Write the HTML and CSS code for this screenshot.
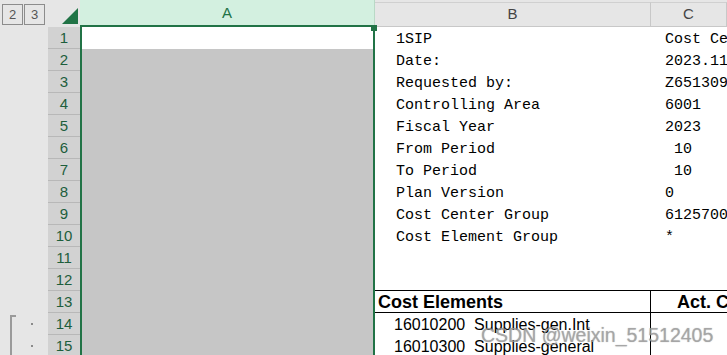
FILE: index.html
```html
<!DOCTYPE html>
<html lang="en">
<head>
    <meta charset="UTF-8">
    <meta name="viewport" content="width=device-width, initial-scale=1.0">
    <title>Cost Center Report</title>
    <link rel="stylesheet" href="styles.css">
</head>
<body>
    <div class="sheet">
        <div class="row head">
            <div class="outline">
                <span class="level">2</span>
                <span class="level">3</span>
            </div>
            <div class="corner"><span class="select-all"></span></div>
            <div class="col-head active">A</div>
            <div class="col-head">B</div>
            <div class="col-head">C</div>
        </div>

        <div class="row"><div class="outline"></div><div class="num">1</div><div class="a current"></div><div class="b">1SIP</div><div class="c">Cost Center</div></div>
        <div class="row"><div class="outline"></div><div class="num">2</div><div class="a"></div><div class="b">Date:</div><div class="c">2023.11</div></div>
        <div class="row"><div class="outline"></div><div class="num">3</div><div class="a"></div><div class="b">Requested by:</div><div class="c">Z651309</div></div>
        <div class="row"><div class="outline"></div><div class="num">4</div><div class="a"></div><div class="b">Controlling Area</div><div class="c">6001</div></div>
        <div class="row"><div class="outline"></div><div class="num">5</div><div class="a"></div><div class="b">Fiscal Year</div><div class="c">2023</div></div>
        <div class="row"><div class="outline"></div><div class="num">6</div><div class="a"></div><div class="b">From Period</div><div class="c"> 10</div></div>
        <div class="row"><div class="outline"></div><div class="num">7</div><div class="a"></div><div class="b">To Period</div><div class="c"> 10</div></div>
        <div class="row"><div class="outline"></div><div class="num">8</div><div class="a"></div><div class="b">Plan Version</div><div class="c">0</div></div>
        <div class="row"><div class="outline"></div><div class="num">9</div><div class="a"></div><div class="b">Cost Center Group</div><div class="c">6125700</div></div>
        <div class="row"><div class="outline"></div><div class="num">10</div><div class="a"></div><div class="b">Cost Element Group</div><div class="c">*</div></div>
        <div class="row"><div class="outline"></div><div class="num">11</div><div class="a"></div><div class="b"></div><div class="c"></div></div>
        <div class="row"><div class="outline"></div><div class="num">12</div><div class="a"></div><div class="b ruled"></div><div class="c ruled"></div></div>
        <div class="row"><div class="outline"></div><div class="num">13</div><div class="a"></div><div class="b title ruled boxed">Cost Elements</div><div class="c title ruled">Act. Costs</div></div>
        <div class="row"><div class="outline group-start"><i class="dot"></i></div><div class="num">14</div><div class="a"></div><div class="b item boxed">16010200  Supplies-gen.Int</div><div class="c"></div></div>
        <div class="row"><div class="outline group"><i class="dot"></i></div><div class="num">15</div><div class="a"></div><div class="b item boxed">16010300  Supplies-general</div><div class="c"></div></div>

        <span class="fill-handle"></span>
        <span class="watermark">CSDN @weixin_51512405</span>
    </div>
</body>
</html>
```
FILE: styles.css
```css
body {
    margin: 0;
    background-color: #e6e6e6;
    font-family: "Liberation Sans", Arial, sans-serif;
    overflow: hidden;
}
.sheet {
    position: relative;
    width: 727px;
    height: 355px;
    overflow: hidden;
}
.row {
    display: grid;
    grid-template-columns: 48px 32px 295px 276px 1fr;
    grid-template-rows: 22px;
    height: 22px;
}
.row.head {
    grid-template-rows: 27px;
    height: 27px;
}
.outline {
    position: relative;
    background-color: #e6e6e6;
}
.head .outline {
    display: flex;
    align-items: flex-start;
    padding: 4px 0 0 2px;
    box-sizing: border-box;
}
.level {
    width: 21px;
    height: 21px;
    border: 1px solid #8c8c8c;
    box-sizing: border-box;
    margin-right: 1px;
    font-size: 13px;
    line-height: 19px;
    text-align: center;
    color: #555;
}
.corner {
    position: relative;
    background-color: #e6e6e6;
}
.select-all {
    position: absolute;
    left: 14px;
    top: 8px;
    width: 0;
    height: 0;
    border-left: 16px solid transparent;
    border-bottom: 16px solid #217346;
}
.col-head {
    margin-top: 2px;
    border-top: 1px solid #d0d0d0;
    border-bottom: 1px solid #c8c8c8;
    border-right: 1px solid #c8c8c8;
    background-color: #e6e6e6;
    box-sizing: border-box;
    font-size: 15px;
    line-height: 22px;
    text-align: center;
    color: #444;
    overflow: hidden;
}
.col-head.active {
    margin-top: 0;
    border-top: none;
    border-bottom: 2px solid #217346;
    border-right: 1px solid #b9d9c6;
    background-color: #d3f0e0;
    line-height: 25px;
    color: #217346;
}
.num {
    background-color: #d2d2d2;
    border-bottom: 1px solid #b8b8b8;
    box-sizing: border-box;
    font-size: 15px;
    line-height: 20px;
    padding-top: 1px;
    text-align: center;
    color: #1d5e3c;
    overflow: hidden;
}
.a {
    background-color: #c6c6c6;
    border-left: 2px solid #217346;
    border-right: 2px solid #217346;
}
.a.current {
    background-color: #fff;
}
.b,
.c {
    background-color: #fff;
    box-sizing: border-box;
    font-family: "Liberation Mono", "Courier New", monospace;
    font-size: 15px;
    line-height: 18px;
    padding-top: 4px;
    color: #000;
    white-space: pre;
    overflow: hidden;
}
.b {
    padding-left: 21px;
}
.c {
    padding-left: 14px;
}
.ruled {
    border-bottom: 1px solid #000;
}
.boxed {
    border-right: 1px solid #000;
}
.title {
    font-family: "Liberation Sans", Arial, sans-serif;
    font-weight: bold;
    font-size: 18px;
    line-height: 20px;
    padding-top: 1px;
}
.b.title {
    padding-left: 3px;
}
.c.title {
    padding-left: 26px;
}
.item {
    font-family: "Liberation Sans", Arial, sans-serif;
    font-size: 16px;
    line-height: 21px;
    padding-top: 1px;
    padding-left: 19px;
}
.group-start::before {
    content: "";
    position: absolute;
    left: 10px;
    top: 2px;
    width: 6px;
    height: 20px;
    border-left: 2px solid #9a9a9a;
    border-top: 2px solid #9a9a9a;
    box-sizing: border-box;
}
.group::before {
    content: "";
    position: absolute;
    left: 10px;
    top: 0;
    width: 2px;
    height: 22px;
    background-color: #9a9a9a;
}
.dot {
    position: absolute;
    left: 31px;
    top: 10px;
    width: 2px;
    height: 2px;
    background-color: #8a8a8a;
}
.fill-handle {
    position: absolute;
    left: 371px;
    top: 25px;
    width: 6px;
    height: 6px;
    background-color: #217346;
}
.watermark {
    position: absolute;
    left: 481px;
    top: 323px;
    font-family: "Liberation Sans", Arial, sans-serif;
    font-size: 19.5px;
    line-height: 24px;
    color: rgba(160, 160, 160, 0.75);
    text-shadow: 0 0 1px rgba(90, 90, 90, 0.5);
    white-space: nowrap;
}
```
